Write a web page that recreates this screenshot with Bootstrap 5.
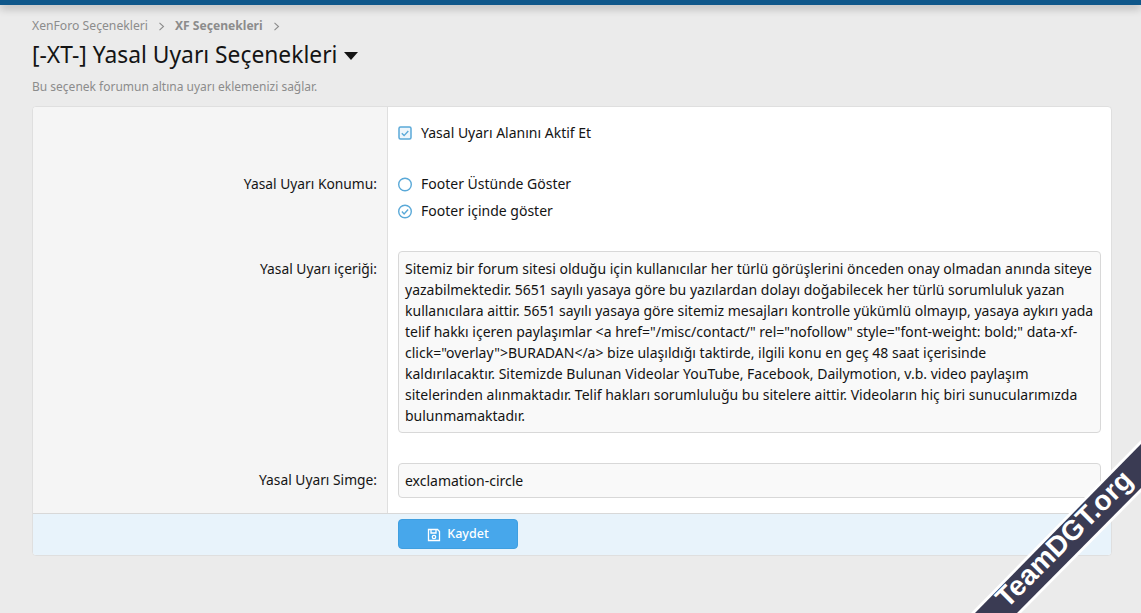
<!DOCTYPE html>
<html lang="tr">
<head>
<meta charset="utf-8">
<title>Yasal Uyarı Seçenekleri</title>
<link href="https://cdn.jsdelivr.net/npm/bootstrap@5.3.0/dist/css/bootstrap.min.css" rel="stylesheet">
<style>
html,body{height:100%;}
body{background:#ebebeb;color:#141414;font-family:"Noto Sans","Open Sans",sans-serif;font-size:14px;overflow:hidden;position:relative;}
.topstrip{height:5px;background:#0f578a;box-shadow:0 3px 8px rgba(0,0,0,.3);}
.page-wrap{padding:0 29px 0 32px;}
.crumbs{padding-top:12px;height:34px;font-size:12.2px;color:#8c8c8c;line-height:17px;display:flex;align-items:flex-start;}
.crumbs b{font-weight:700;font-size:12.1px;}
.crumb-sep{width:27px;flex:none;display:flex;justify-content:center;padding-top:5px;}
.page-title{font-size:22.8px;font-weight:400;line-height:32px;margin:0;color:#141414;}
.title-caret{display:inline-block;width:0;height:0;border-left:7.5px solid transparent;border-right:7.5px solid transparent;border-top:8px solid #141414;margin-left:7px;vertical-align:3px;}
.page-desc{font-size:12px;color:#8c8c8c;line-height:17px;margin-top:7px;margin-bottom:11px;}
.form-panel{background:#fff;border:1px solid #dfdfdf;border-radius:4px;overflow:hidden;}
.form-line{display:flex;}
.form-label-col{width:355px;flex:none;background:#f5f5f5;border-right:1px solid #dfdfdf;padding-right:10px;text-align:right;font-size:13.8px;}
.form-value-col{flex:1;padding-left:10px;padding-right:10px;}
.line-check .form-label-col,.line-check .form-value-col{height:50px;}
.line-check .form-value-col{padding-top:16px;}
.line-radio .form-label-col{padding-top:17px;}
.line-radio .form-value-col{padding-top:17px;height:94px;}
.line-text .form-label-col{padding-top:7px;}
.line-area .form-value-col{height:212px;}
.line-text .form-value-col{height:50px;}
.opt{display:flex;align-items:center;line-height:20px;height:20px;margin-bottom:7px;}
.opt svg{flex:none;margin-right:8px;}
.xf-area{background:#f9f9f9;border:1px solid #d8d8d8;border-radius:4px;padding:6px;line-height:21px;height:182px;overflow:hidden;font-size:14px;white-space:nowrap;}
.xf-input{background:#f9f9f9;border:1px solid #d8d8d8;border-radius:4px;padding:0 6px;height:35px;line-height:33px;}
.form-foot{background:#e8f3fb;border-top:1px solid #d8d8d8;height:42px;padding:5px 0 0 365px;}
.save-btn{width:120px;height:30px;background:#47a7eb;border:1px solid #3f9fe0;border-radius:4px;color:#fff;font-size:12.5px;font-weight:500;display:flex;align-items:center;justify-content:center;gap:6px;padding:1px 0 0;}
.ribbon{position:absolute;left:941px;top:420px;}
.ribbon-text{font-family:"Liberation Sans",sans-serif;font-weight:700;font-size:28px;fill:#fff;}
</style>
</head>
<body>
<div class="topstrip"></div>
<div class="page-wrap">
  <div class="crumbs"><span>XenForo Seçenekleri</span><span class="crumb-sep"><svg width="7" height="9" viewBox="0 0 7 9" fill="none" stroke="#8c8c8c" stroke-width="1.1"><path d="M1.5 .8l4 3.7-4 3.7"/></svg></span><b>XF Seçenekleri</b><span class="crumb-sep"><svg width="7" height="9" viewBox="0 0 7 9" fill="none" stroke="#8c8c8c" stroke-width="1.1"><path d="M1.5 .8l4 3.7-4 3.7"/></svg></span></div>
  <h1 class="page-title">[-XT-] Yasal Uyarı Seçenekleri<span class="title-caret"></span></h1>
  <div class="page-desc">Bu seçenek forumun altına uyarı eklemenizi sağlar.</div>
  <div class="form-panel">
    <div class="form-line line-check">
      <div class="form-label-col"></div>
      <div class="form-value-col">
        <div class="opt">
          <svg width="15" height="15" viewBox="0 0 15 15"><rect x="1" y="1" width="12" height="12" rx="1.5" fill="#eef6fc" stroke="#5aa9d8" stroke-width="1.5"/><path d="M3.8 7.2l2.3 2.4 4.2-4.6" fill="none" stroke="#5aa9d8" stroke-width="1.4"/></svg>
          <span>Yasal Uyarı Alanını Aktif Et</span>
        </div>
      </div>
    </div>
    <div class="form-line line-radio">
      <div class="form-label-col">Yasal Uyarı Konumu:</div>
      <div class="form-value-col">
        <div class="opt">
          <svg width="15" height="15" viewBox="0 0 15 15"><circle cx="7" cy="7.5" r="6.3" fill="none" stroke="#5aa9d8" stroke-width="1.4"/></svg>
          <span>Footer Üstünde Göster</span>
        </div>
        <div class="opt">
          <svg width="15" height="15" viewBox="0 0 15 15"><circle cx="7" cy="7.5" r="6.3" fill="none" stroke="#5aa9d8" stroke-width="1.4"/><path d="M3.9 7.6l2.2 2.3 4-4.3" fill="none" stroke="#5aa9d8" stroke-width="1.4"/></svg>
          <span>Footer içinde göster</span>
        </div>
      </div>
    </div>
    <div class="form-line line-area">
      <div class="form-label-col"><div class="pt-2">Yasal Uyarı içeriği:</div></div>
      <div class="form-value-col">
        <div class="xf-area">Sitemiz bir forum sitesi olduğu için kullanıcılar her türlü görüşlerini önceden onay olmadan anında siteye<br>yazabilmektedir. 5651 sayılı yasaya göre bu yazılardan dolayı doğabilecek her türlü sorumluluk yazan<br>kullanıcılara aittir. 5651 sayılı yasaya göre sitemiz mesajları kontrolle yükümlü olmayıp, yasaya aykırı yada<br>telif hakkı içeren paylaşımlar &lt;a href="/misc/contact/" rel="nofollow" style="font-weight: bold;" data-xf-<br>click="overlay"&gt;BURADAN&lt;/a&gt; bize ulaşıldığı taktirde, ilgili konu en geç 48 saat içerisinde<br>kaldırılacaktır. Sitemizde Bulunan Videolar YouTube, Facebook, Dailymotion, v.b. video paylaşım<br>sitelerinden alınmaktadır. Telif hakları sorumluluğu bu sitelere aittir. Videoların hiç biri sunucularımızda<br>bulunmamaktadır.</div>
      </div>
    </div>
    <div class="form-line line-text">
      <div class="form-label-col">Yasal Uyarı Simge:</div>
      <div class="form-value-col"><div class="xf-input">exclamation-circle</div></div>
    </div>
    <div class="form-foot">
      <button type="button" class="btn save-btn">
        <svg width="14" height="14" viewBox="0 0 14 14" fill="none" stroke="#fff" stroke-width="1.3"><path d="M1.5 1.5h9l2 2v9h-11z"/><path d="M4 1.5v3.5h5V1.5"/><circle cx="7" cy="9" r="1.7"/></svg>
        Kaydet
      </button>
    </div>
  </div>
</div>
<svg class="ribbon" width="200" height="193" viewBox="0 0 200 193">
  <polygon points="200,20 200,72 80,193 30,193" fill="#fff"/>
  <polygon points="200,24 200,68 76,193 34,193" fill="#3a3b53"/>
  <text class="ribbon-text" transform="translate(66,189) rotate(-45)">TeamDGT.org</text>
</svg>
</body>
</html>
